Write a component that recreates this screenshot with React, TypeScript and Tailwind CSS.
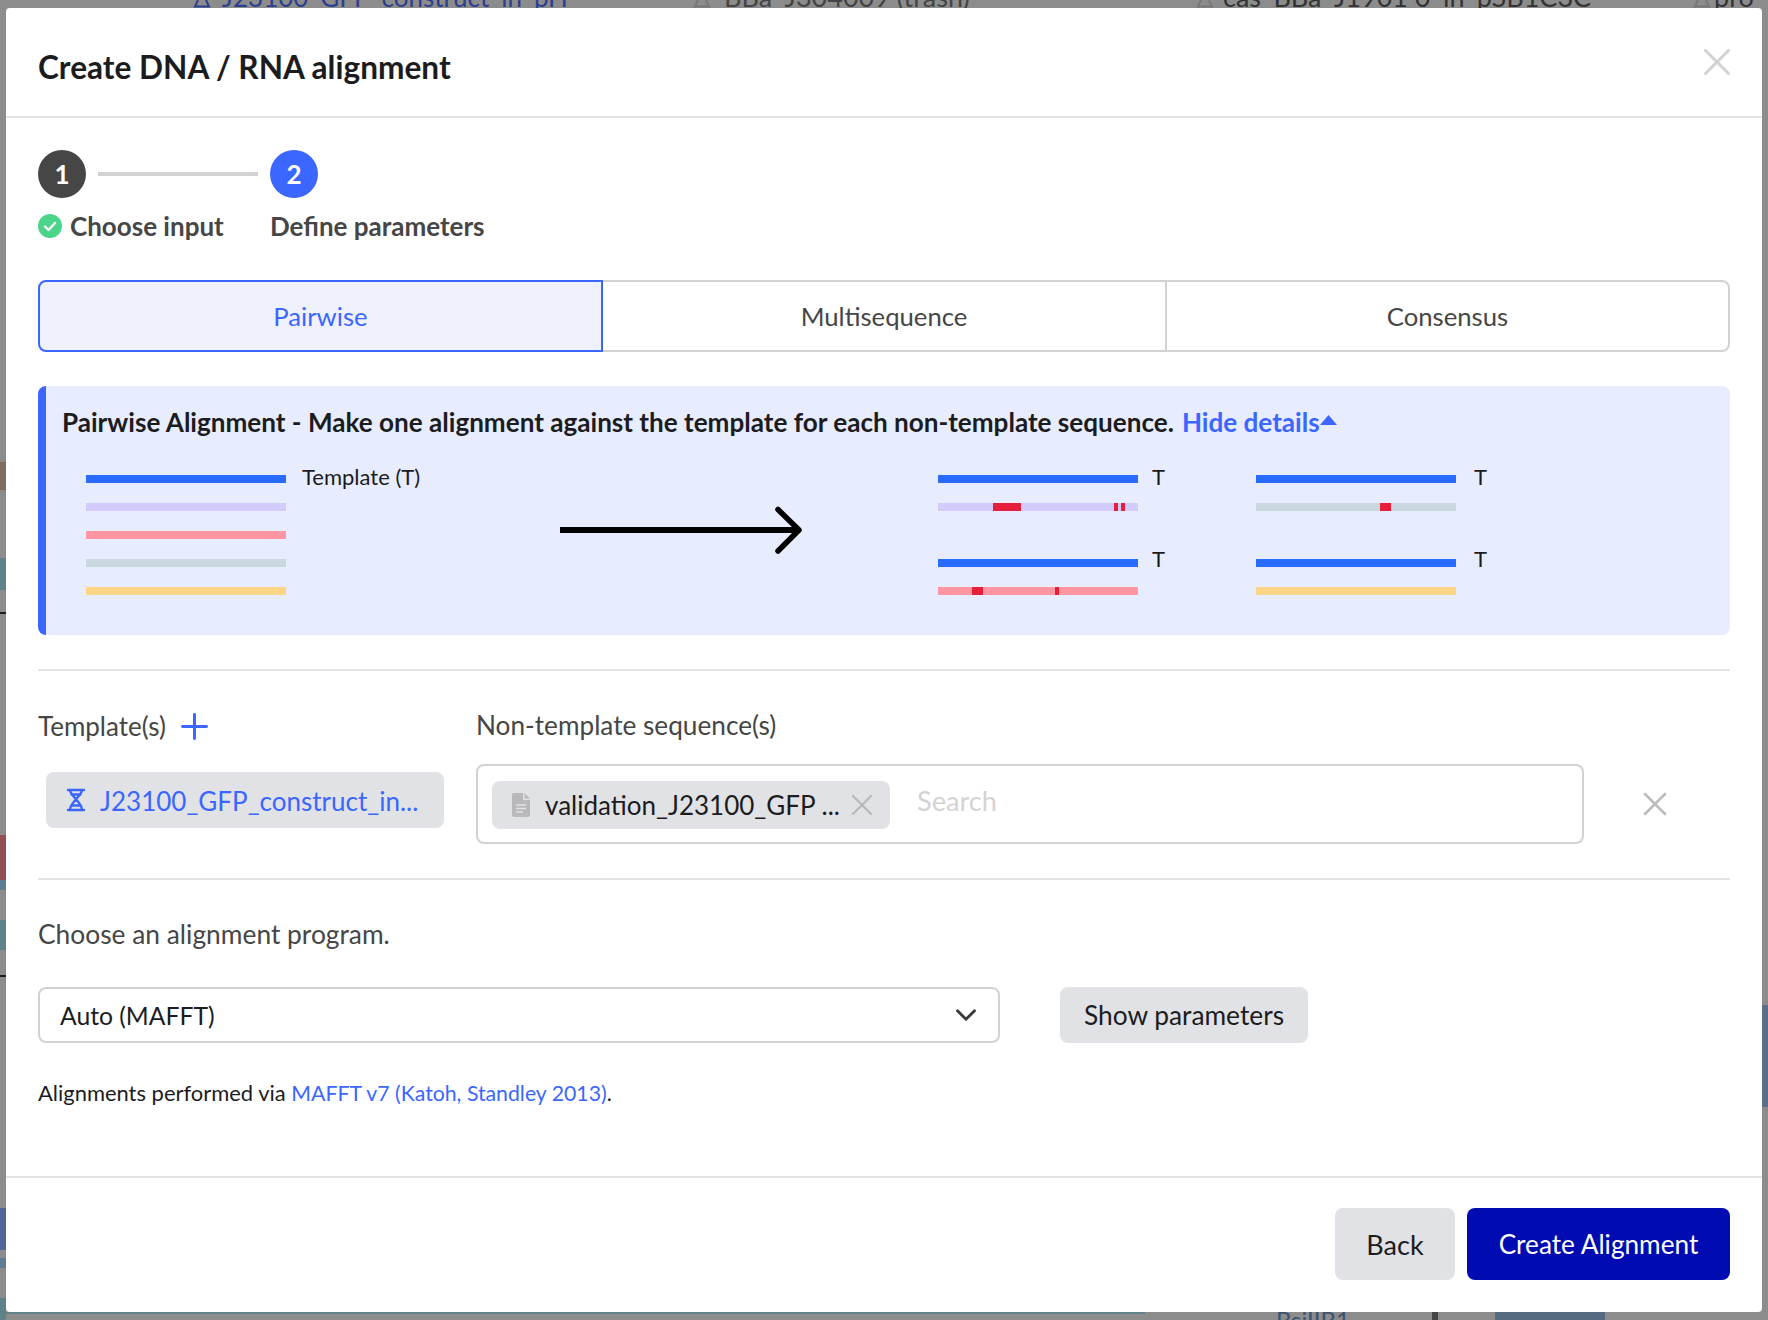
import { ChevronDown, Plus, X } from "lucide-react";

const font = { fontFamily: "Lato, 'Open Sans', sans-serif" };

// slivers of the page that show around the modal
const leftStrips = [
  { top: 462, height: 28, color: "#7d6c5f" },
  { top: 558, height: 32, color: "#5f8288" },
  { top: 612, height: 2, color: "#1c1c1c" },
  { top: 835, height: 45, color: "#925055" },
  { top: 880, height: 10, color: "#5f7c95" },
  { top: 920, height: 30, color: "#5f8288" },
  { top: 975, height: 2, color: "#1c1c1c" },
  { top: 1208, height: 42, color: "#52659b" },
  { top: 1258, height: 10, color: "#5f7c95" },
  { top: 1298, height: 22, color: "#5f8288" },
];

const topTabs = [
  { left: 222, icon: 192, color: "text-[#2c3f8f] text-[26px]", stroke: "#2c3f8f", label: "J23100_GFP_construct_in_pH" },
  { left: 724, icon: 692, color: "text-[#444444] text-[27px]", stroke: "#777777", label: "BBa_J304009 (trash)" },
  { left: 1223, icon: 1195, color: "text-[#333333] text-[27px]", stroke: "#777777", label: "cas_BBa_J1901 0_in_pSB1C3C" },
  { left: 1714, icon: 1692, color: "text-[#333333] text-[27px]", stroke: "#777777", label: "pro" },
];

function AlignmentDiagram() {
  const textCls = "fill-[#1c1c1e] text-[22px]";
  const pairs = [
    { x: 938, y: 475, tx: 214, ty: 10, color: "#d3cbfb", marks: [[55, 28], [176, 4], [183, 4]] },
    { x: 1256, y: 475, tx: 218, ty: 10, color: "#c9d8de", marks: [[124, 11]] },
    { x: 938, y: 559, tx: 214, ty: 8, color: "#ff96a2", marks: [[34, 11], [117, 4]] },
    { x: 1256, y: 559, tx: 218, ty: 8, color: "#fcd586", marks: [] },
  ];
  return (
    <svg width="1684" height="160" viewBox="46 450 1684 160" className="block" style={font}>
      {["#2a6bff", "#d3cbfb", "#ff96a2", "#c9d8de", "#fcd586"].map((c, i) => (
        <rect key={c} x={86} y={475 + i * 28} width={200} height={8} fill={c} />
      ))}
      <text x={302} y={485} className={textCls}>Template (T)</text>
      <path d="M560 530H798" fill="none" stroke="#000" strokeWidth={6} />
      <path d="M778 509.5L799 530L778 551" fill="none" stroke="#000" strokeWidth={5.5} strokeLinecap="round" strokeLinejoin="round" />
      {pairs.map((p) => (
        <g key={`${p.x}-${p.y}`}>
          <rect x={p.x} y={p.y} width={200} height={8} fill="#2a6bff" />
          <rect x={p.x} y={p.y + 28} width={200} height={8} fill={p.color} />
          {p.marks.map(([start, w]) => (
            <rect key={start} x={p.x + start} y={p.y + 28} width={w} height={8} fill="#e6203a" />
          ))}
          <text x={p.x + p.tx} y={p.y + p.ty} className={textCls}>T</text>
        </g>
      ))}
    </svg>
  );
}

function DnaIcon() {
  return (
    <svg width="20" height="24" viewBox="0 0 20 24" fill="none" stroke="#3b66ff" strokeWidth="2.4" strokeLinecap="round" className="shrink-0">
      <path d="M2 2H18M2 22H18M4 2C4 8 16 14 16 22M16 2C16 8 4 14 4 22M5.5 6.5H14.5M5.5 17.5H14.5" />
    </svg>
  );
}

function DocIcon() {
  return (
    <svg width="18" height="24" viewBox="0 0 18 24" className="shrink-0">
      <path d="M2 0H11V7H18V22A2 2 0 0 1 16 24H2A2 2 0 0 1 0 22V2A2 2 0 0 1 2 0Z" fill="#b9b9bb" />
      <path d="M12.5 0L18 5.5H12.5Z" fill="#b9b9bb" />
      <path d="M4 12H14M4 15.5H14M4 19H11" stroke="#e1e2e5" strokeWidth="1.6" />
    </svg>
  );
}

export default function App() {
  return (
    <div className="relative w-[1768px] h-[1320px] overflow-hidden bg-[#8c8c8c]" style={font}>
      {/* page behind the overlay */}
      {leftStrips.map((s) => (
        <div key={s.top} className="absolute left-0 w-[6px]" style={{ top: s.top, height: s.height, backgroundColor: s.color }} />
      ))}
      <div className="absolute left-[1762px] top-[1005px] w-[6px] h-[102px] bg-[#5b7088]" />
      {topTabs.map((t) => (
        <div key={t.left}>
          <div className={`absolute top-[-18px] leading-[30px] whitespace-nowrap ${t.color}`} style={{ left: t.left }}>
            {t.label}
          </div>
          <svg width="20" height="8" viewBox="0 0 20 8" className="absolute top-0" style={{ left: t.icon }}>
            <path d="M6 0L3 6.5H17L14 0" fill="none" stroke={t.stroke} strokeWidth="2" />
          </svg>
        </div>
      ))}
      <div className="absolute left-[6px] top-[1312px] w-[1139px] h-[2px] bg-[#5f8288]" />
      <div className="absolute left-[1276px] top-[1305px] text-[24px] leading-[30px] text-[#3c5270] whitespace-nowrap">BsiIIB1</div>
      <div className="absolute left-[1432px] top-[1312px] w-[6px] h-[8px] bg-[#444444]" />
      <div className="absolute left-[1495px] top-[1312px] w-[110px] h-[8px] bg-[#566a80]" />

      <div className="pt-[8px] pl-[6px]">
        <div className="relative w-[1756px] h-[1304px] bg-white rounded-[4px] flex flex-col">
          {/* header */}
          <div className="h-[110px] shrink-0 border-b-2 border-[#e3e3e3] flex items-center justify-between pl-[32px] pr-[22px]">
            <h1 className="text-[31.6px] font-bold text-[#1c1c1e] mt-[11px]">Create DNA / RNA alignment</h1>
            <X size={46} strokeWidth={1.6} className="text-[#d2d2d2] mt-[-1px] shrink-0" />
          </div>

          <div className="flex-1 px-[32px]">
            {/* stepper */}
            <div className="flex items-center mt-[32px]">
              <div className="w-[48px] h-[48px] rounded-full bg-[#464646] flex items-center justify-center text-white text-[26px] font-bold">1</div>
              <div className="w-[160px] h-[4px] bg-[#d2d2d2] mx-[12px]" />
              <div className="w-[48px] h-[48px] rounded-full bg-[#3b66ff] flex items-center justify-center text-white text-[26px] font-bold">2</div>
            </div>
            <div className="flex items-center mt-[13px] h-[30px] text-[26px] font-bold text-[#464646]">
              <svg width="24" height="24" viewBox="0 0 24 24" className="mr-[8px]">
                <circle cx="12" cy="12" r="12" fill="#4cd58a" />
                <path d="M7 12.5L10.5 16L17 9" fill="none" stroke="#fff" strokeWidth="2.4" strokeLinecap="round" strokeLinejoin="round" />
              </svg>
              <span className="w-[200px]">Choose input</span>
              <span>Define parameters</span>
            </div>

            {/* tabs */}
            <div className="flex mt-[39px] h-[72px] text-[25.7px] text-[#464646]">
              <div className="w-[565px] rounded-l-[8px] border-2 border-[#3b66ff] bg-[#eff1fd] text-[#3b66ff] flex items-center justify-center">Pairwise</div>
              <div className="w-[564px] border-y-2 border-r-2 border-[#d2d2d2] flex items-center justify-center">Multisequence</div>
              <div className="flex-1 rounded-r-[8px] border-y-2 border-r-2 border-[#d2d2d2] flex items-center justify-center">Consensus</div>
            </div>

            {/* description */}
            <div className="mt-[34px] h-[249px] rounded-[8px] border-l-[8px] border-[#3b66ff] bg-[#e7edfe]">
              <div className="pl-[16px] pt-[10px] h-[64px] text-[26.1px] font-bold text-[#1c1c1e] flex items-center gap-[8px] whitespace-nowrap">
                <span>Pairwise Alignment - Make one alignment against the template for each non-template sequence.</span>
                <span className="text-[#3b66ff] flex items-center">
                  Hide details
                  <svg width="17" height="10" viewBox="0 0 17 10" className="mt-[-6px]"><path d="M8.5 0L17 10H0Z" fill="#3b66ff" /></svg>
                </span>
              </div>
              <AlignmentDiagram />
            </div>

            <div className="h-[2px] bg-[#e3e3e3] mt-[34px]" />

            {/* sequences */}
            <div className="flex mt-[35px]">
              <div className="w-[438px] shrink-0">
                <div className="flex items-center h-[40px] text-[26px] text-[#464646] gap-[8px]">
                  Template(s)
                  <Plus size={41} strokeWidth={1.75} className="text-[#3b66ff] shrink-0" />
                </div>
                <div className="ml-[8px] mt-[26px] w-[398px] h-[56px] rounded-[8px] bg-[#e1e2e5] flex items-center pl-[20px] gap-[14px] text-[26px] text-[#3b66ff]">
                  <DnaIcon />
                  <span className="whitespace-nowrap mt-[3px]">J23100_GFP_construct_in...</span>
                </div>
              </div>
              <div className="flex-1">
                <div className="h-[40px] flex items-center text-[26.2px] text-[#464646]">Non-template sequence(s)</div>
                <div className="flex items-center mt-[18px]">
                  <div className="w-[1108px] h-[80px] rounded-[8px] border-2 border-[#d2d2d2] flex items-center pl-[14px]">
                    <div className="w-[398px] h-[48px] mt-[2px] rounded-[8px] bg-[#e1e2e5] flex items-center pl-[20px] gap-[15px] text-[26px] text-[#1c1c1e] whitespace-nowrap">
                      <DocIcon />
                      <span className="w-[294px] shrink-0">validation_J23100_GFP ...</span>
                      <X size={36} strokeWidth={1.5} className="text-[#b9b9bb] ml-[-10px] shrink-0" />
                    </div>
                    <span className="ml-[27px] mt-[-6px] text-[27.2px] text-[#d3d3d3]">Search</span>
                  </div>
                  <X size={40} strokeWidth={1.6} className="text-[#bdbdbd] ml-[51px] shrink-0" />
                </div>
              </div>
            </div>

            <div className="h-[2px] bg-[#e3e3e3] mt-[34px]" />

            {/* program */}
            <div className="mt-[38px] h-[34px] flex items-center text-[26.35px] text-[#464646]">Choose an alignment program.</div>
            <div className="flex mt-[35px]">
              <div className="w-[962px] h-[56px] rounded-[8px] border-2 border-[#d2d2d2] flex items-center justify-between pl-[20px] pr-[15px] text-[24.7px] text-[#1c1c1e]">
                <span className="mt-[2px]">Auto (MAFFT)</span>
                <ChevronDown size={34} strokeWidth={2} className="text-[#3a3a3a] shrink-0" />
              </div>
              <div className="ml-[60px] w-[248px] h-[56px] pt-[2px] rounded-[8px] bg-[#e1e2e5] flex items-center justify-center text-[26.3px] text-[#1c1c1e]">Show parameters</div>
            </div>
            <p className="mt-[35px] text-[21.95px] leading-[30px] text-[#1c1c1e]">
              Alignments performed via <span className="text-[21.25px] text-[#3b66ff]">MAFFT v7 (Katoh, Standley 2013)</span>.
            </p>
          </div>

          {/* footer */}
          <div className="h-[136px] shrink-0 border-t-2 border-[#e3e3e3] flex justify-end gap-[12px] pt-[30px] pr-[32px]">
            <div className="w-[120px] h-[72px] pt-[2px] rounded-[8px] bg-[#e1e2e5] flex items-center justify-center text-[27px] text-[#1c1c1e]">Back</div>
            <div className="w-[263px] h-[72px] pt-[2px] rounded-[8px] bg-[#000cb2] flex items-center justify-center text-[26.2px] text-white">Create Alignment</div>
          </div>
        </div>
      </div>
    </div>
  );
}
